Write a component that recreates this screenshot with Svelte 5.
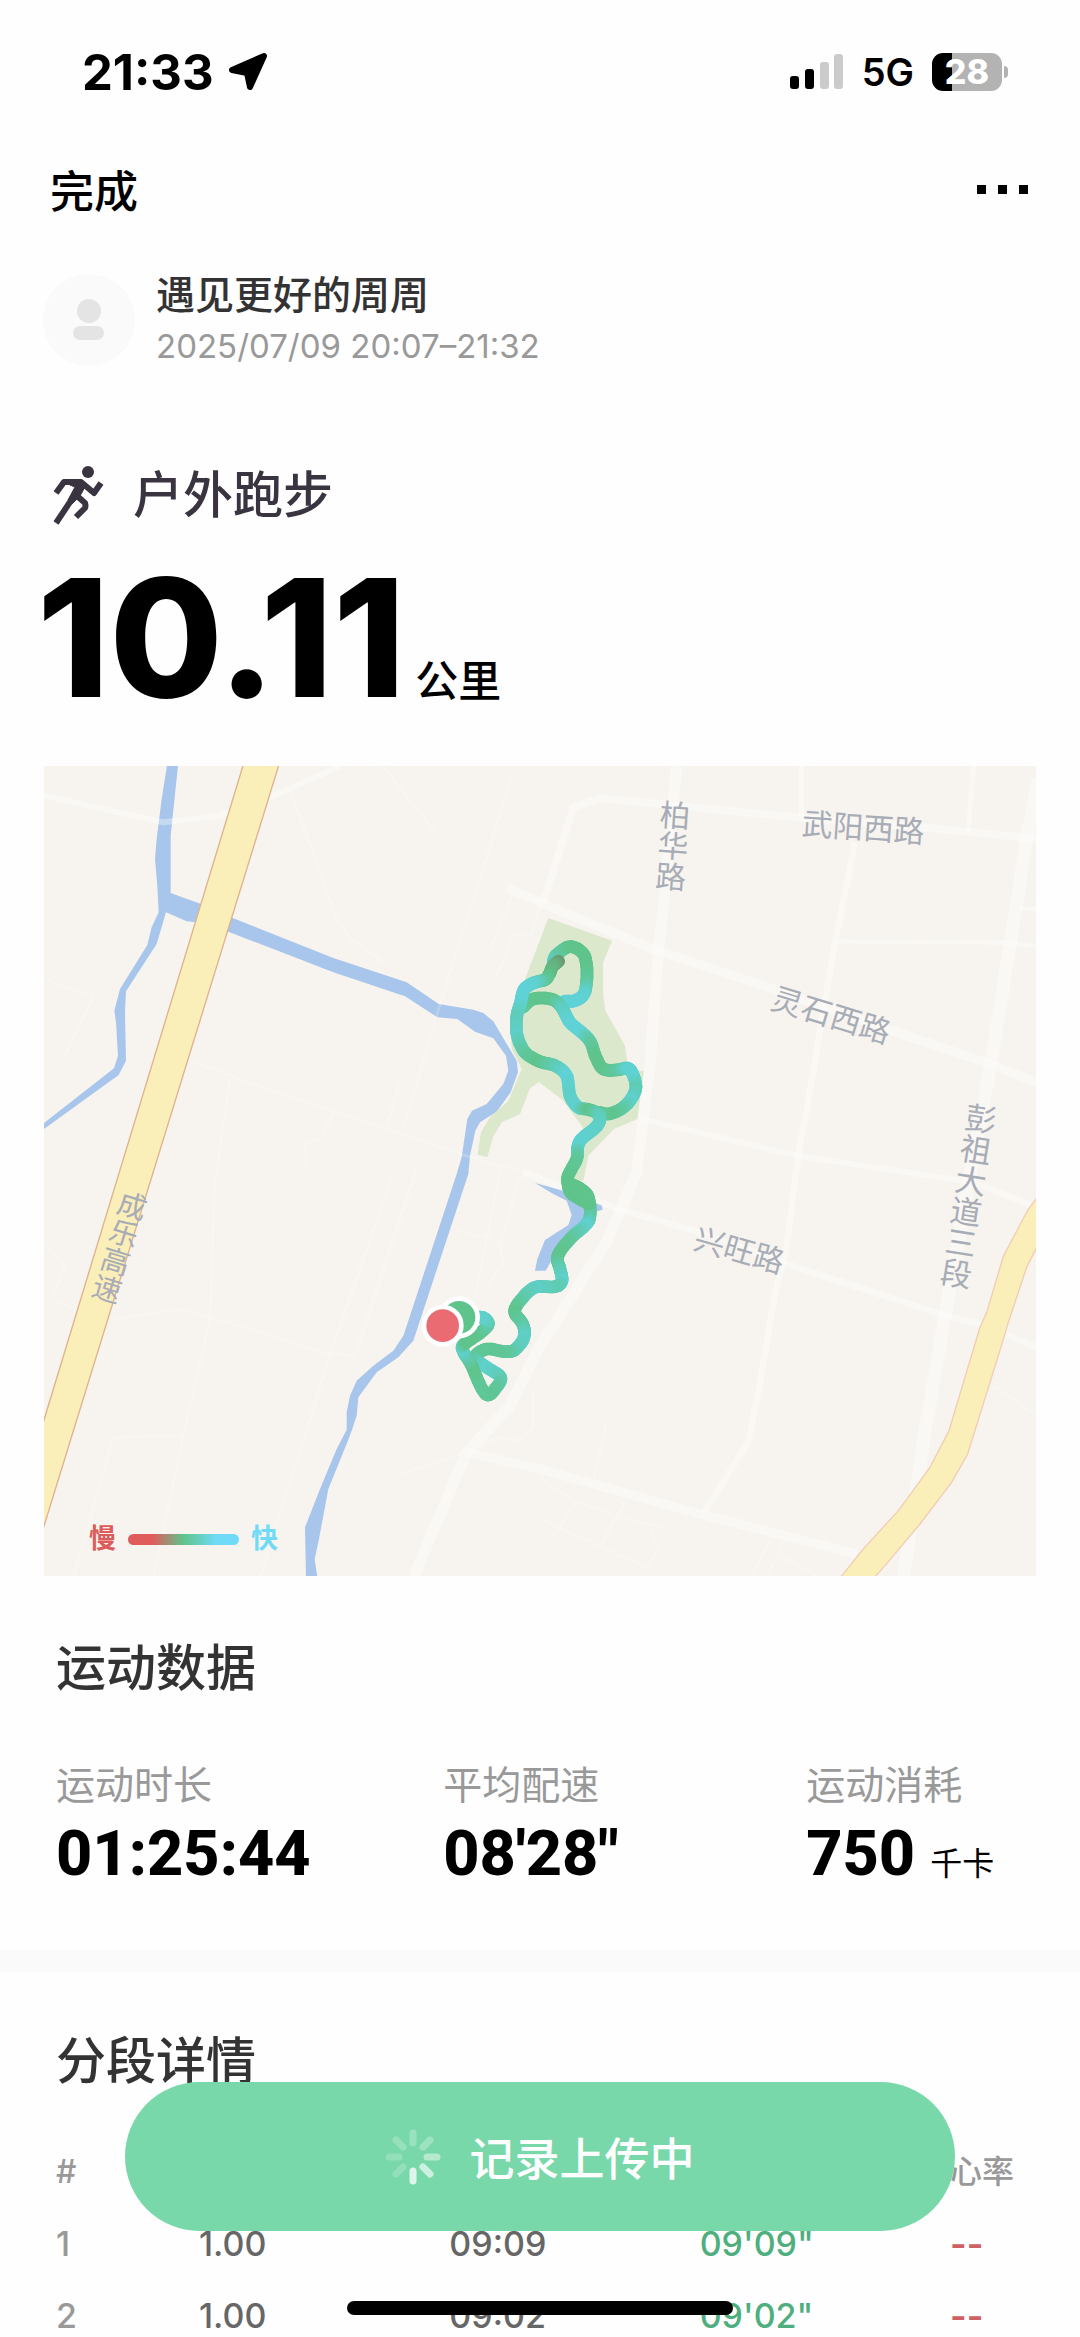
<script lang="ts">
	type Point = [number, number, number];

	const stats = [
		{ label: '运动时长', value: '01:25:44', unit: '' },
		{ label: '平均配速', value: '08′28″', unit: '' },
		{ label: '运动消耗', value: '750', unit: '千卡' }
	];

	const splits = [
		{ id: 1, distance: '1.00', time: '09:09', pace: '09\'09"', heart: '--' },
		{ id: 2, distance: '1.00', time: '09:02', pace: '09\'02"', heart: '--' }
	];

	// minor roads: width and path
	const roads = [
		{ w: 34, d: 'M1910 20L1870 440L1855 580L1830 920L1790 1240L1742 1352L1700 1450L1500 1760L1410 1940L1280 2080L1120 2455' },
		{ w: 24, d: 'M1510 430L1600 145L1680 118L2270 175L2700 210L2990 240' },
		{ w: 28, d: 'M1400 385L1500 430L1850 575L2200 690L2540 810L2850 915L2990 970' },
		{ w: 20, d: 'M2445 250L2385 550L2300 1050L2275 1190L2240 1460L2200 1630L2160 1870L2125 2050L1990 2262' },
		{ w: 16, d: 'M2285 20V170M2800 20L2785 220' },
		{ w: 40, d: 'M2995 60L2960 240L2910 560L2850 930L2780 1300L2715 1670L2650 2050L2590 2455' },
		{ w: 14, d: 'M2385 548L2900 550L2990 562M2940 450H2990' },
		{ w: 18, d: 'M1805 1080L2270 1190L2800 1270L2990 1345' },
		{ w: 20, d: 'M1450 1240L1740 1352L1980 1420L2240 1515L2715 1670L2820 1695L2990 1765' },
		{ w: 28, d: 'M1280 2080L1500 2130L1980 2265L2450 2385' },
		{ w: 18, d: 'M12 110L370 190L540 170L700 110L900 22' }
	];

	const lanes =
		'M460 910L800 1030L1260 1185L1450 1240M750 90L890 480L935 540L1030 610M1420 40L1190 770L1090 1110M1030 22L1190 225' +
		'M570 960L525 1270L510 1680L430 2030L340 2455M220 1680L430 1650L870 1785L945 1790L1130 1230M12 1460L75 1520L35 1620L200 1690' +
		'M100 2455L220 2035L430 2030M1060 1240L870 1790L660 2455M20 660L160 715L75 890M880 1060L840 1140L795 1155L800 1220' +
		'M1080 970L1040 1100M1350 575L1420 400L1500 430M1365 665L1420 530L1475 525L1500 440M1380 1240L1300 1640M1250 1410L1380 1450' +
		'M1440 1250L1380 1460L1390 1510L1340 1580M1080 2145L1280 2080M1480 1880L1480 2005L1440 2045L1370 2035L1290 2080' +
		'M1500 2160L1610 2230L1760 2280L1885 2310M1700 1985L1660 2170M1610 2230L1535 2335M1500 2280L1820 2425L1855 2370L1830 2310M1760 2220L1680 2360' +
		'M2190 2345L2130 2455M2230 2350L2180 2455M2220 2390L2340 2455M2860 1880L2990 1970';

	// route points: x, y, speed (0 steady, 1 fast, below 0 slow)
	const trails: Point[][] = [
		[
			[1540, 605, 0.9], [1552, 585, 0.5], [1590, 563, 0], [1628, 582, 0], [1640, 620, 0], [1640, 665, 0.2],
			[1632, 705, 0.9], [1605, 725, 1], [1575, 727, 1], [1565, 740, 1]
		],
		[
			[1448, 745, 0.4], [1475, 722, 0.1], [1510, 717, 0], [1545, 725, 0.1], [1568, 750, 0.7], [1590, 790, 1],
			[1625, 820, 1], [1652, 850, 0.3], [1668, 895, 0], [1690, 930, 0], [1730, 933, 0.2], [1765, 928, 0.9],
			[1782, 955, 1], [1787, 990, 0.5], [1770, 1025, 0.9], [1740, 1052, 0.3], [1705, 1065, 0], [1680, 1060, 0.2]
		],
		[
			[1556, 607, -0.5], [1538, 622, -0.2], [1528, 645, -0.1], [1515, 662, 0.1], [1480, 672, 0.9], [1452, 692, 1],
			[1442, 730, 1], [1430, 775, 0.6], [1432, 830, 0.8], [1455, 880, 0.3], [1500, 908, 0], [1545, 920, 0.5],
			[1580, 950, 1], [1590, 1010, 0.8], [1615, 1045, 0.9], [1648, 1052, 0], [1678, 1068, 0.6], [1672, 1100, 0.8],
			[1625, 1140, 0.9], [1613, 1165, 0.9], [1610, 1200, 0.2], [1582, 1262, 0], [1620, 1288, 0], [1645, 1315, 0],
			[1650, 1370, 0.3], [1635, 1400, 0.9], [1590, 1440, 0.2], [1553, 1492, 0], [1560, 1530, 0.5], [1566, 1565, 0.9],
			[1545, 1583, 0.5], [1485, 1585, 0.8], [1445, 1620, 0.4], [1424, 1658, 0], [1448, 1695, 0.3], [1452, 1735, 0.8],
			[1425, 1772, 0.6], [1395, 1778, 0.2], [1340, 1770, 0.1], [1305, 1795, 0.2], [1340, 1825, 0.9], [1382, 1855, 0.6],
			[1365, 1890, 0.2], [1342, 1908, 0.1], [1320, 1878, 0.2], [1295, 1820, 0], [1267, 1770, 0.9], [1280, 1750, 0],
			[1320, 1722, 0], [1345, 1695, 0.4], [1325, 1675, 0.9], [1280, 1680, 0.8]
		],
		[[1582, 1262, 0], [1590, 1298, 0], [1620, 1320, 0], [1648, 1335, 0]]
	];

	const slow = [122, 104, 88];
	const steady = [95, 196, 139];
	const fast = [95, 210, 214];

	function speedColor(t: number) {
		const to = t < 0 ? slow : fast;
		const k = Math.min(Math.abs(t), 1);
		return `rgb(${steady.map((c, i) => Math.round(c + (to[i] - c) * k)).join(',')})`;
	}

	function spline(a: number, b: number, c: number, d: number, t: number) {
		return 0.5 * (2 * b + (c - a) * t + (2 * a - 5 * b + 4 * c - d) * t * t + (3 * b - a - 3 * c + d) * t * t * t);
	}

	// cut a route into short pieces so each can carry its own colour
	function toPieces(points: Point[]) {
		const steps = 7;
		const out = [];
		for (let i = 0; i < points.length - 1; i++) {
			const p = [points[Math.max(i - 1, 0)], points[i], points[i + 1], points[Math.min(i + 2, points.length - 1)]];
			const at = (t: number, k: number) => Math.round(spline(p[0][k], p[1][k], p[2][k], p[3][k], t));
			for (let s = 0; s < steps; s++) {
				const t = s / steps;
				const n = (s + 1) / steps;
				out.push({
					x1: at(t, 0),
					y1: at(t, 1),
					x2: at(n, 0),
					y2: at(n, 1),
					color: speedColor(p[1][2] + (p[2][2] - p[1][2]) * t)
				});
			}
		}
		return out;
	}

	const pieces = trails.flatMap(toPieces);

	const mapLabels = [
		{ text: '柏华路', x: 1893, y: 260, angle: 4, vertical: true, size: 92 },
		{ text: '武阳西路', x: 2470, y: 205, angle: 4, vertical: false, size: 92 },
		{ text: '灵石西路', x: 2374, y: 768, angle: 17, vertical: false, size: 92 },
		{ text: '彭祖大道三段', x: 2778, y: 1310, angle: 9, vertical: true, size: 94 },
		{ text: '兴旺路', x: 2098, y: 1473, angle: 16, vertical: false, size: 92 },
		{ text: '成乐高速', x: 232, y: 1462, angle: 17, vertical: true, size: 87 }
	];

	const spokes = [0.25, 0.28, 0.45, 0.62, 0.75, 0.2, 0.2, 0.22];
</script>

<div class="screen">
	<div class="status-bar">
		<div class="status-group">
			<span class="clock">21:33</span>
			<svg class="location" viewBox="0 0 40 40" aria-hidden="true">
				<path d="M36 4L22 35L19 21L4 18Z" />
			</svg>
		</div>
		<div class="status-group right">
			<svg class="signal" viewBox="0 0 54 36" aria-hidden="true">
				<rect x="0" y="22" width="9" height="13" rx="3" />
				<rect x="15" y="15" width="9" height="20" rx="3" />
				<rect class="off" x="30" y="8" width="9" height="27" rx="3" />
				<rect class="off" x="44" y="0" width="9" height="35" rx="3" />
			</svg>
			<span class="network">5G</span>
			<span class="battery"><span class="battery-body">28</span><span class="battery-cap"></span></span>
		</div>
	</div>

	<header class="nav">
		<button class="done">完成</button>
		<button class="more" aria-label="更多"><i></i><i></i><i></i></button>
	</header>

	<main>
		<section class="profile">
			<svg class="avatar" viewBox="0 0 92 92" aria-hidden="true">
				<circle cx="46" cy="46" r="46" fill="#fafafa" />
				<circle cx="46" cy="37" r="12" />
				<rect x="30" y="52" width="31" height="14" rx="7" />
			</svg>
			<div>
				<div class="name">遇见更好的周周</div>
				<div class="date">2025/07/09 20:07–21:32</div>
			</div>
		</section>

		<section class="summary">
			<h1>
				<svg class="runner" viewBox="0 0 56 64" aria-hidden="true">
					<circle cx="38" cy="9" r="6" />
					<path class="torso" d="M22 17H31L36 22L30 33L22 41L18 37L25 24L20 22Z" />
					<path d="M6 30L14 19H31L44 30L51 20" />
					<path d="M26 30L6 60" stroke-width="7" />
					<path d="M26 32L35 40Q36 43 35 45L26 54" />
				</svg>
				户外跑步
			</h1>
			<p class="distance"><strong>10.11</strong><span>公里</span></p>
		</section>

		<div class="map">
			<svg viewBox="12 21 2976 2430" role="img" aria-label="户外跑步">
				<rect x="12" y="21" width="2976" height="2430" fill="#f7f4ef" />
				<path
					class="water"
					d="M381 20L414 20L392 230V402L485 436L580 478L880 597L1100 670L1196 735L1300 752L1330 762L1360 787L1430 905L1434 940L1412 1000L1370 1058L1320 1090L1306 1115L1290 1190L1285 1245L1120 1745L1075 1795L1010 1840L955 1915L950 1970L936 2012L922 2050L865 2190L835 2350L824 2400L832 2455H798L795 2305L840 2190L890 2070L920 2012L920 1960L930 1910L950 1865L1000 1820L1060 1775L1090 1730L1110 1670L1250 1245L1265 1195L1282 1080L1296 1055L1340 1035L1390 975L1405 935L1398 890L1360 838L1305 818L1252 780L1192 775L1095 712L880 640L565 518L470 490L440 487L378 460L350 555L258 697L255 760L258 905L236 948L12 1110V1092L222 928L234 890L228 790L223 755L240 690L322 558L335 505L356 460L352 380L345 300L350 240L365 120Z"
				/>
				<path
					class="park"
					d="M1525 477L1716 545L1689 612V700L1696 755L1755 860L1765 935H1812L1792 1080L1722 1110L1645 1190L1630 1265H1585L1625 1140L1628 1105L1570 1025L1497 969L1470 988L1440 1065L1385 1090L1360 1132L1342 1195L1313 1187L1323 1120L1350 1075L1405 1025L1445 930L1415 870L1410 800L1440 700Z"
				/>
				<path
					class="water"
					d="M1485 1272L1570 1295L1600 1325L1660 1330L1685 1338L1688 1352L1660 1360L1570 1440L1517 1535H1485L1492 1500L1515 1443L1585 1398L1595 1368L1580 1325L1540 1305Z"
				/>
				<path class="lane" d={lanes} />
				{#each roads as road}
					<path class="road" d={road.d} stroke-width={road.w} />
				{/each}
				<path class="highway" d="M612 10H719L0 2340V2022Z" />
				<path
					class="highway pale"
					d="M3000 1305L2965 1350L2890 1492L2840 1660L2820 1705L2727 2015L2670 2125L2575 2255L2468 2372L2390 2470H2490L2535 2420L2640 2295L2735 2170L2783 2085L2875 1790L2905 1690L2960 1525L3000 1445Z"
				/>
				{#each mapLabels as label}
					<text
						class:vertical={label.vertical}
						font-size={label.size}
						transform="translate({label.x} {label.y}) rotate({label.angle})">{label.text}</text
					>
				{/each}
				<g class="trail">
					{#each pieces as p}
						<line x1={p.x1} y1={p.y1} x2={p.x2} y2={p.y2} stroke={p.color} />
					{/each}
				</g>
				<g class="marker">
					<circle cx="1257" cy="1675" r="56" fill="#5fc48b" />
					<circle cx="1208" cy="1700" r="56" fill="#ea6c72" />
				</g>
			</svg>
			<div class="legend">
				<span class="slow">慢</span>
				<span class="scale"></span>
				<span class="fast">快</span>
			</div>
		</div>

		<section class="data">
			<h2>运动数据</h2>
			<dl>
				{#each stats as stat}
					<div>
						<dt>{stat.label}</dt>
						<dd>{stat.value}{#if stat.unit}<small>{stat.unit}</small>{/if}</dd>
					</div>
				{/each}
			</dl>
		</section>

		<section class="splits">
			<h2>分段详情</h2>
			<table>
				<thead>
					<tr>
						<th class="index">#</th>
						<th></th>
						<th></th>
						<th></th>
						<th>心率</th>
					</tr>
				</thead>
				<tbody>
					{#each splits as split}
						<tr>
							<td class="index">{split.id}</td>
							<td>{split.distance}</td>
							<td>{split.time}</td>
							<td class="pace">{split.pace}</td>
							<td class="heart">{split.heart}</td>
						</tr>
					{/each}
				</tbody>
			</table>
		</section>
	</main>

	<button class="upload">
		<svg viewBox="0 0 56 56" aria-hidden="true">
			{#each spokes as opacity, i}
				<line x1="28" y1="4" x2="28" y2="14" stroke-opacity={opacity} transform="rotate({i * 45} 28 28)" />
			{/each}
		</svg>
		记录上传中
	</button>
	<div class="home-indicator"></div>
</div>

<style>
	:global(body) {
		background: #fefefe;
	}

	.screen {
		position: relative;
		min-height: 100vh;
		overflow: hidden;
		color: #000;
		font-family: Inter, 'Noto Sans CJK SC', sans-serif;
	}

	button {
		border: 0;
		padding: 0;
		background: none;
		color: inherit;
		font-family: inherit;
		cursor: pointer;
	}

	h1,
	h2,
	p,
	dl,
	dd {
		margin: 0;
	}

	.status-bar {
		display: flex;
		justify-content: space-between;
		align-items: center;
		height: 144px;
		padding: 0 72px 0 82px;
	}

	.status-group {
		display: flex;
		align-items: center;
		gap: 14px;
	}

	.status-group.right {
		gap: 18px;
	}

	.clock {
		font-size: 49px;
		font-weight: 700;
	}

	.location {
		width: 40px;
		height: 40px;
		stroke: #000;
		stroke-width: 6;
		stroke-linejoin: round;
	}

	.signal {
		width: 54px;
		height: 36px;
	}

	.signal .off {
		fill: #cbcbcb;
	}

	.network {
		font-size: 38px;
		font-weight: 600;
	}

	.battery {
		display: flex;
		align-items: center;
		gap: 2px;
	}

	.battery-body {
		width: 70px;
		border-radius: 11px;
		background: linear-gradient(90deg, #000 28%, #b3b3b3 28%);
		color: #fff;
		font-size: 34px;
		font-weight: 800;
		line-height: 38px;
		text-align: center;
	}

	.battery-cap {
		width: 4px;
		height: 12px;
		border-radius: 0 6px 6px 0;
		background: #b3b3b3;
	}

	.nav {
		display: flex;
		justify-content: space-between;
		align-items: center;
		height: 90px;
		padding: 0 52px 0 50px;
	}

	.done {
		font-size: 44px;
		font-weight: 500;
	}

	.more {
		display: flex;
		gap: 12px;
		padding: 12px 0;
	}

	.more i {
		width: 9px;
		height: 9px;
		background: #000;
	}

	.profile {
		display: flex;
		align-items: center;
		gap: 21px;
		padding: 35px 43px 0;
	}

	.avatar {
		width: 92px;
		height: 92px;
		fill: #e4e4e4;
	}

	.name {
		color: #333;
		font-size: 39px;
		font-weight: 500;
		line-height: 52px;
	}

	.date {
		color: #999;
		font-size: 33px;
		line-height: 50px;
	}

	.summary {
		padding: 92px 43px 0;
	}

	h1 {
		display: flex;
		align-items: center;
		gap: 27px;
		padding-left: 7px;
		color: #3a3340;
		font-size: 50px;
		font-weight: 500;
		line-height: 60px;
	}

	.runner {
		width: 56px;
		height: 64px;
		fill: #3a3340;
	}

	.runner path {
		fill: none;
		stroke: #3a3340;
		stroke-width: 6;
		stroke-linejoin: round;
	}

	.runner .torso {
		fill: #3a3340;
		stroke-width: 1;
	}

	.distance {
		display: flex;
		align-items: baseline;
		gap: 10px;
		height: 239px;
		margin-left: -6px;
	}

	.distance strong {
		font-size: 164px;
		font-weight: 800;
		line-height: 222px;
	}

	.distance span {
		font-size: 43px;
		font-weight: 500;
	}

	.map {
		position: relative;
		margin: 0 44px;
	}

	.map svg {
		display: block;
		width: 100%;
	}

	.water {
		fill: #a8c5eb;
	}

	.park {
		fill: #dbe8cc;
	}

	.road,
	.lane {
		fill: none;
		stroke: #fff;
		stroke-opacity: 0.35;
		stroke-linejoin: round;
	}

	.lane {
		stroke-width: 8;
		stroke-opacity: 0.2;
	}

	.highway {
		fill: #faeeb9;
		stroke: #dfb28e;
		stroke-width: 4;
	}

	.highway.pale {
		stroke: #f1cdb4;
	}

	.map text {
		fill: #a8acb6;
		text-anchor: middle;
		dominant-baseline: central;
	}

	.map text.vertical {
		writing-mode: vertical-rl;
	}

	.trail {
		stroke-width: 38;
		stroke-linecap: round;
	}

	.marker {
		stroke: #fff;
		stroke-width: 14;
	}

	.legend {
		position: absolute;
		left: 45px;
		bottom: 18px;
		display: flex;
		align-items: center;
		gap: 12px;
		font-size: 27px;
		font-weight: 700;
		line-height: 38px;
	}

	.slow {
		color: #dc5c5c;
	}

	.fast {
		color: #6fdbf7;
	}

	.scale {
		width: 111px;
		height: 11px;
		border-radius: 6px;
		background: linear-gradient(90deg, #e05b5b 22%, #5fc48b 50%, #6fdbf7 80%);
	}

	.data {
		padding: 62px 56px 60px;
	}

	h2 {
		color: #333;
		font-size: 50px;
		font-weight: 500;
		line-height: 60px;
	}

	dl {
		display: grid;
		grid-template-columns: 16fr 15fr 9fr;
		padding-top: 60px;
	}

	dt {
		color: #999;
		font-size: 39px;
		line-height: 54px;
	}

	dd {
		display: flex;
		align-items: baseline;
		gap: 15px;
		height: 78px;
		font-family: Roboto, 'Noto Sans CJK SC', sans-serif;
		font-size: 63px;
		font-weight: 800;
		line-height: 84px;
		white-space: nowrap;
	}

	small {
		font-size: 32px;
		font-weight: 400;
		line-height: 40px;
	}

	.splits {
		padding: 59px 56px 0;
		border-top: 22px solid #fafafa;
	}

	table {
		width: 100%;
		margin-top: 63px;
		border-collapse: collapse;
		table-layout: fixed;
		color: #666;
		font-size: 34px;
		line-height: 36px;
		text-align: left;
	}

	th,
	td {
		height: 36px;
		padding: 0;
		font-weight: 500;
		white-space: nowrap;
	}

	td {
		padding-top: 36px;
	}

	th {
		color: #999;
		font-size: 32px;
	}

	.index {
		width: 143px;
		color: #999;
	}

	th:last-child {
		width: 74px;
	}

	.pace {
		color: #4fae7e;
	}

	.heart {
		color: #cf5f63;
		font-size: 36px;
		font-weight: 600;
	}

	.upload {
		position: absolute;
		right: 125px;
		bottom: 106px;
		left: 125px;
		display: flex;
		justify-content: center;
		align-items: center;
		gap: 28px;
		height: 149px;
		border-radius: 75px;
		background: #79d8aa;
		color: #fff;
		font-size: 45px;
		font-weight: 500;
	}

	.upload svg {
		width: 56px;
		height: 56px;
		stroke: #fff;
		stroke-width: 7;
		stroke-linecap: round;
	}

	.home-indicator {
		position: absolute;
		bottom: 22px;
		left: 50%;
		width: 386px;
		height: 14px;
		margin-left: -193px;
		border-radius: 7px;
		background: #000;
	}
</style>
